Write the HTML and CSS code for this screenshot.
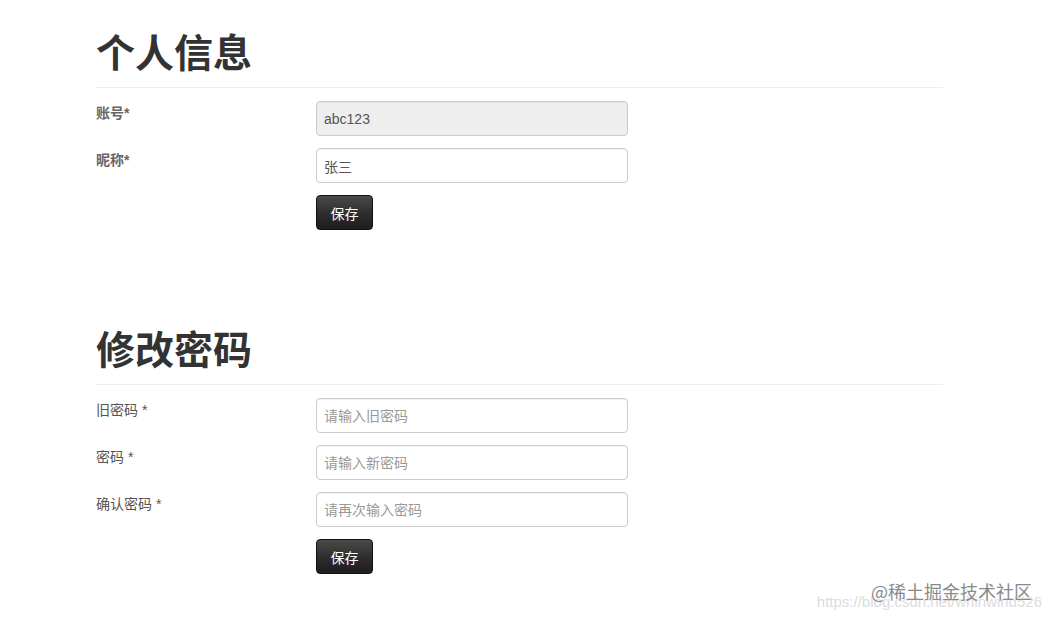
FILE: index.html
```html
<!DOCTYPE html>
<html lang="zh-CN">
<head>
<meta charset="utf-8">
<title>个人信息</title>
<link rel="stylesheet" href="styles.css">
</head>
<body>
<div class="page">
  <section class="block">
    <h1 class="title">个人信息</h1>
    <div class="rule"></div>
    <form class="form">
      <div class="row">
        <label class="label bold">账号*</label>
        <input class="field disabled" type="text" value="abc123" disabled>
      </div>
      <div class="row">
        <label class="label bold">昵称*</label>
        <input class="field" type="text" value="张三">
      </div>
      <div class="row">
        <span class="label"></span>
        <button class="btn" type="button">保存</button>
      </div>
    </form>
  </section>

  <section class="block second">
    <h1 class="title">修改密码</h1>
    <div class="rule"></div>
    <form class="form">
      <div class="row">
        <label class="label">旧密码 *</label>
        <input class="field" type="password" placeholder="请输入旧密码">
      </div>
      <div class="row">
        <label class="label">密码 *</label>
        <input class="field" type="password" placeholder="请输入新密码">
      </div>
      <div class="row">
        <label class="label">确认密码 *</label>
        <input class="field" type="password" placeholder="请再次输入密码">
      </div>
      <div class="row">
        <span class="label"></span>
        <button class="btn" type="button">保存</button>
      </div>
    </form>
  </section>
</div>
<div class="watermark">
  <div class="wm-url">https://blog.csdn.net/whinwind526</div>
  <div class="wm-main">@稀土掘金技术社区</div>
</div>
</body>
</html>
```

FILE: styles.css
```css
* { box-sizing: border-box; }
html, body {
  margin: 0;
  padding: 0;
  background: #fff;
}
body {
  font-family: "Liberation Sans", Arial, "Noto Sans CJK SC", sans-serif;
  color: #555;
  width: 1050px;
  height: 620px;
  overflow: hidden;
  position: relative;
}
.page {
  padding: 28px 0 0 96px;
  width: 943px;
}
.block.second {
  margin-top: 95px;
}
.title {
  margin: 0;
  font-family: "Noto Sans CJK SC", sans-serif;
  font-size: 39px;
  line-height: 44px;
  font-weight: 700;
  color: #333;
  letter-spacing: 0;
}
.rule {
  margin-top: 15px;
  height: 1px;
  background: #eee;
}
.form {
  margin-top: 13px;
  display: flex;
  flex-direction: column;
  gap: 12px;
}
.row {
  display: flex;
  align-items: flex-start;
}
.label {
  width: 220px;
  flex: none;
  font-size: 14px;
  line-height: 18px;
  padding-top: 3px;
  color: #555;
  font-family: "Liberation Sans", Arial, "Noto Sans CJK SC", sans-serif;
}
.label.bold {
  font-weight: 700;
  color: #666;
}
.field {
  width: 312px;
  height: 35px;
  border: 1px solid #ccc;
  border-radius: 4px;
  padding: 0 8px 0 7px;
  font-size: 14px;
  font-family: "Liberation Sans", Arial, "Noto Sans CJK SC", sans-serif;
  color: #555;
  background: #fff;
  box-shadow: inset 0 1px 1px rgba(0,0,0,0.05);
  outline: none;
}
.field::placeholder {
  color: #999;
}
.field.disabled {
  background: #eee;
  color: #555;
  -webkit-text-fill-color: #555;
  opacity: 1;
}
.btn {
  width: 57px;
  height: 35px;
  border: 1px solid #111;
  border-radius: 4px;
  background: linear-gradient(to bottom, #4a4a4a 0%, #2a2a2a 60%, #1e1e1e 100%);
  color: #fff;
  font-size: 14px;
  font-family: "Liberation Sans", Arial, "Noto Sans CJK SC", sans-serif;
  padding: 0;
  cursor: pointer;
}
.watermark {
  position: absolute;
  right: 8px;
  top: 578px;
  width: 240px;
  height: 36px;
}
.wm-url {
  position: absolute;
  right: 0;
  top: 15px;
  font-size: 15px;
  color: #dcdcdc;
  font-family: "Liberation Sans", Arial, sans-serif;
  white-space: nowrap;
}
.wm-main {
  position: absolute;
  right: 10px;
  top: 0;
  font-size: 18px;
  line-height: 26px;
  color: #8a8a8a;
  font-family: "Noto Sans CJK SC", sans-serif;
  white-space: nowrap;
  text-shadow: 0 0 2px #fff;
}
```
